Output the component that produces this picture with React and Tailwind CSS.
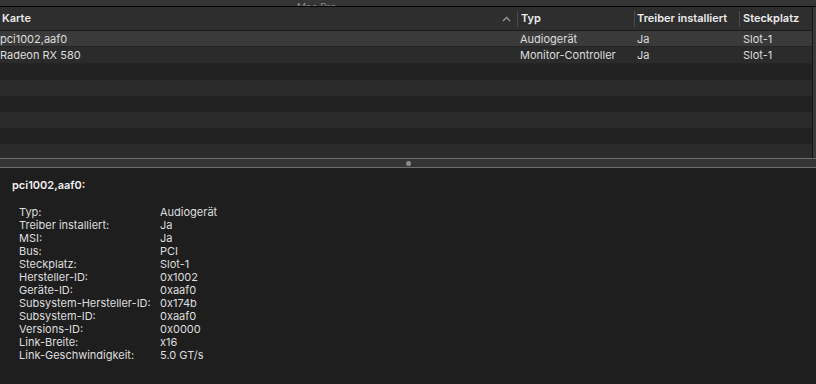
const rows = [
  { name: "pci1002,aaf0", typ: "Audiogerät", treiber: "Ja", slot: "Slot-1" },
  { name: "Radeon RX 580", typ: "Monitor-Controller", treiber: "Ja", slot: "Slot-1" },
];

const details = [
  ["Typ:", "Audiogerät"],
  ["Treiber installiert:", "Ja"],
  ["MSI:", "Ja"],
  ["Bus:", "PCI"],
  ["Steckplatz:", "Slot-1"],
  ["Hersteller-ID:", "0x1002"],
  ["Geräte-ID:", "0xaaf0"],
  ["Subsystem-Hersteller-ID:", "0x174b"],
  ["Subsystem-ID:", "0xaaf0"],
  ["Versions-ID:", "0x0000"],
  ["Link-Breite:", "x16"],
  ["Link-Geschwindigkeit:", "5.0 GT/s"],
];

export default function App() {
  return (
    <div
      className="w-[816px] h-[384px] overflow-hidden bg-[#1e1e1e] text-[11px] text-[#dedede] flex flex-col"
      style={{ fontFamily: 'Inter, "Liberation Sans", Arial, sans-serif' }}
    >
      {/* title bar remnant */}
      <div className="h-[6px] shrink-0 bg-[#353535] flex items-end overflow-hidden pl-[297px]">
        <span className="text-[10px] leading-[10px] text-[#8a8a8a] translate-y-[6px]">Mac Pro</span>
      </div>
      <div className="h-[1px] shrink-0 bg-black" />

      <div className="flex h-[151px] shrink-0">
        <div className="flex-1 flex flex-col">
          {/* header */}
          <div className="h-[24px] shrink-0 bg-[#2e2e2e] border-b border-[#1a1a1a] flex items-center font-semibold text-[#ececec]">
            <div className="w-[517px] flex items-center pl-[2px] pr-[6px]">
              <span>Karte</span>
              <svg className="ml-auto" width="9" height="6" viewBox="0 0 9 6">
                <path d="M1 5 L4.5 1.5 L8 5" fill="none" stroke="#9a9a9a" strokeWidth="1.3" />
              </svg>
            </div>
            <div className="w-[117px] h-[16px] border-l border-[#4a4a4a] pl-[3px] flex items-center">Typ</div>
            <div className="w-[105px] h-[16px] border-l border-[#4a4a4a] pl-[2px] flex items-center">Treiber installiert</div>
            <div className="flex-1 h-[16px] border-l border-[#4a4a4a] pl-[3px] flex items-center">Steckplatz</div>
          </div>
          {/* rows */}
          {rows.map((r, i) => (
            <div
              key={r.name}
              className={`shrink-0 flex items-center border-b border-[#242424] pt-[1px] ${i === 0 ? "h-[16px] bg-[#3a3a3a]" : "h-[17px] bg-[#2b2b2b]"}`}
            >
              <div className="w-[517px]">{r.name}</div>
              <div className="w-[117px] pl-[3px]">{r.typ}</div>
              <div className="w-[105px] pl-[3px]">{r.treiber}</div>
              <div className="flex-1 pl-[4px]">{r.slot}</div>
            </div>
          ))}
          {[0, 1, 2, 3, 4].map((i) => (
            <div key={i} className={`h-[16px] shrink-0 ${i % 2 === 0 ? "bg-[#212121]" : "bg-[#2b2b2b]"}`} />
          ))}
          <div className="flex-1 bg-[#2b2b2b]" />
        </div>
        <div className="w-[4px] border-l border-[#151515] bg-[#3a3a3a]" />
      </div>

      {/* splitter */}
      <div className="h-[10px] shrink-0 bg-[#353535] border-y border-[#6e6e6e] flex items-center justify-center">
        <div className="w-[5px] h-[5px] rounded-full bg-[#8c8c8c]" />
      </div>

      {/* detail */}
      <div className="flex-1 pl-[12px] pt-[11px]">
        <div className="font-semibold text-[#f0f0f0] leading-[13px]">pci1002,aaf0:</div>
        <div className="mt-[14px] pl-[7px] flex flex-col">
          {details.map(([k, v]) => (
            <div key={k} className="flex leading-[13px]">
              <div className="w-[141px]">{k}</div>
              <div>{v}</div>
            </div>
          ))}
        </div>
      </div>
    </div>
  );
}
